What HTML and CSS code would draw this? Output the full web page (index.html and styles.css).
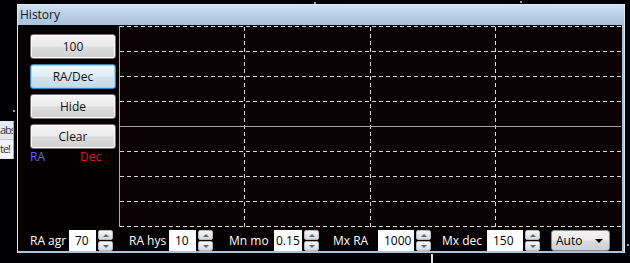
FILE: index.html
```html
<!DOCTYPE html>
<html lang="en">
<head>
    <meta charset="UTF-8">
    <title>History</title>
    <link rel="stylesheet" href="styles.css">
</head>
<body>
    <div class="desktop">
        <span class="star" style="left:13px;top:110px"></span>
        <span class="star" style="left:627px;top:244px"></span>
        <span class="star" style="left:314px;top:2px"></span>
        <span class="star" style="left:520px;top:1px"></span>
        <span class="star bar" style="left:431px;top:254px"></span>

        <div class="other-window">
            <div class="other-row">abs</div>
            <div class="other-row second">te!</div>
        </div>

        <div class="window">
            <div class="titlebar">History</div>
            <div class="client">
                <div class="side">
                    <button class="btn">100</button>
                    <button class="btn focused">RA/Dec</button>
                    <button class="btn">Hide</button>
                    <button class="btn">Clear</button>
                    <div class="legend">
                        <span class="ra">RA</span>
                        <span class="dec">Dec</span>
                    </div>
                </div>
                <div class="chart">
                    <svg width="502" height="201" viewBox="0 0 502 201">
                        <g stroke="#d8d8d8" stroke-width="1" stroke-dasharray="4 3" fill="none">
                            <line x1="1" y1="0.5" x2="502" y2="0.5"/>
                            <line x1="1" y1="25.5" x2="502" y2="25.5"/>
                            <line x1="1" y1="50.5" x2="502" y2="50.5"/>
                            <line x1="1" y1="75.5" x2="502" y2="75.5"/>
                            <line x1="1" y1="125.5" x2="502" y2="125.5"/>
                            <line x1="1" y1="150.5" x2="502" y2="150.5"/>
                            <line x1="1" y1="175.5" x2="502" y2="175.5"/>
                            <line x1="1" y1="200.5" x2="502" y2="200.5"/>
                            <line x1="125.5" y1="1" x2="125.5" y2="201"/>
                            <line x1="251.5" y1="1" x2="251.5" y2="201"/>
                            <line x1="376.5" y1="1" x2="376.5" y2="201"/>
                        </g>
                        <line x1="0.5" y1="0" x2="0.5" y2="201" stroke="#a8a8a8"/>
                        <line x1="1" y1="100.5" x2="502" y2="100.5" stroke="#a0a0a0"/>
                    </svg>
                </div>
                <div class="controls">
                    <div class="field">
                        <span class="label w39">RA agr</span>
                        <span class="input w27">70</span>
                        <span class="spin"><i class="up"></i><i class="down"></i></span>
                    </div>
                    <div class="field gap16">
                        <span class="label w40">RA hys</span>
                        <span class="input w27">10</span>
                        <span class="spin"><i class="up"></i><i class="down"></i></span>
                    </div>
                    <div class="field gap16">
                        <span class="label w45">Mn mo</span>
                        <span class="input w28 tight">0.15</span>
                        <span class="spin"><i class="up"></i><i class="down"></i></span>
                    </div>
                    <div class="field gap14">
                        <span class="label w45">Mx RA</span>
                        <span class="input w36">1000</span>
                        <span class="spin"><i class="up"></i><i class="down"></i></span>
                    </div>
                    <div class="field gap11">
                        <span class="label w45">Mx dec</span>
                        <span class="input w36">150</span>
                        <span class="spin"><i class="up"></i><i class="down"></i></span>
                    </div>
                    <div class="select gap11">
                        <span>Auto</span>
                        <span class="caret"></span>
                    </div>
                </div>
            </div>
        </div>
    </div>
</body>
</html>
```

FILE: styles.css
```css
body {
    margin: 0;
    background-color: #000;
    font-family: 'Segoe UI', 'Open Sans', 'DejaVu Sans', sans-serif;
    font-size: 12px;
    overflow: hidden;
}

.desktop {
    position: relative;
    width: 630px;
    height: 263px;
    background-color: #020204;
}

.star {
    position: absolute;
    width: 2px;
    height: 2px;
    background-color: #9aa0a8;
}

.star.bar {
    width: 2px;
    height: 9px;
    background-color: #d8dde4;
}

/* piece of another window behind */
.other-window {
    position: absolute;
    left: 0;
    top: 121px;
    width: 13px;
    height: 38px;
    background-color: #e6eaf0;
    border-right: 1px solid #9aa4b0;
    overflow: hidden;
    color: #333;
    font-size: 11px;
}

.other-row {
    height: 18px;
    line-height: 18px;
    letter-spacing: -1px;
    white-space: nowrap;
}

.other-row.second {
    border-top: 1px solid #c2c8d0;
    background-color: #f2f4f8;
}

/* main window */
.window {
    position: absolute;
    left: 17px;
    top: 4px;
    width: 606px;
    border: 1px solid #dde8f4;
    border-bottom: none;
    background-color: #000;
}

.titlebar {
    height: 20px;
    line-height: 19px;
    padding-left: 2px;
    color: #141414;
    background: linear-gradient(to bottom, #cddff2, #a9c1dc);
}

.client {
    display: grid;
    grid-template-columns: 86px 502px;
    grid-template-rows: 201px 22px;
    column-gap: 3px;
    row-gap: 2px;
    padding: 1px 3px 0 12px;
    background-color: #050102;
    border-right: 2px solid #a7c3dd;
    border-bottom: 2px solid #a7c3dd;
}

.side {
    display: flex;
    flex-direction: column;
    gap: 5px;
    padding-top: 8px;
}

.btn {
    height: 25px;
    padding: 0;
    font-family: inherit;
    font-size: 12px;
    color: #111;
    border: 1px solid #707070;
    border-radius: 3px;
    background: linear-gradient(to bottom, #f4f4f4 0%, #ebebeb 48%, #dddddd 52%, #cfcfcf 100%);
    box-shadow: inset 0 0 0 1px #fcfcfc;
}

.btn.focused {
    border-color: #3c7fb1;
    background: linear-gradient(to bottom, #eef6fb 0%, #e2eef6 48%, #d3e4ef 52%, #c4d9e6 100%);
    box-shadow: inset 0 0 0 1px #9ad6f2;
}

.legend {
    display: flex;
    margin-top: -4px;
    line-height: 14px;
}

.ra {
    color: #6262ff;
    width: 50px;
}

.dec {
    color: #d81c1c;
}

.chart {
    background-color: #0a0204;
    overflow: hidden;
}

.chart svg {
    display: block;
}

.controls {
    grid-column: 1 / 3;
    display: flex;
    align-items: stretch;
    margin-top: 1px;
}

.field {
    display: flex;
    align-items: stretch;
}

.label {
    color: #fff;
    line-height: 22px;
}

.w39 { width: 39px; }
.w40 { width: 40px; }
.w45 { width: 45px; }

.gap16 { margin-left: 16px; }
.gap14 { margin-left: 14px; }
.gap11 { margin-left: 11px; }

.input {
    background-color: #fff;
    color: #000;
    line-height: 22px;
    padding-left: 6px;
    box-sizing: border-box;
}

.input.tight {
    padding-left: 2px;
}

.w27 { width: 27px; }
.w28 { width: 28px; }
.w36 { width: 36px; }

.spin {
    display: flex;
    flex-direction: column;
    width: 15px;
    margin-left: 2px;
    gap: 1px;
    background-color: #050102;
}

.spin i {
    flex: 1;
    position: relative;
    border: 1px solid #b8b8b8;
    border-radius: 2px;
    background: linear-gradient(to bottom, #f6f6f6, #d8d8d8);
}

.spin i::after {
    content: '';
    position: absolute;
    left: 4px;
    top: 3px;
    border-left: 3px solid transparent;
    border-right: 3px solid transparent;
}

.spin .up::after {
    border-bottom: 3px solid #5a6878;
}

.spin .down::after {
    border-top: 3px solid #5a6878;
}

.select {
    display: flex;
    align-items: center;
    justify-content: space-between;
    width: 59px;
    box-sizing: border-box;
    padding: 0 6px 0 4px;
    color: #000;
    border: 1px solid #8a8a8a;
    border-radius: 3px;
    background: linear-gradient(to bottom, #f2f2f2 0%, #ebebeb 48%, #dcdcdc 52%, #cfcfcf 100%);
}

.caret {
    width: 0;
    height: 0;
    border-left: 4px solid transparent;
    border-right: 4px solid transparent;
    border-top: 4px solid #000;
}
```
